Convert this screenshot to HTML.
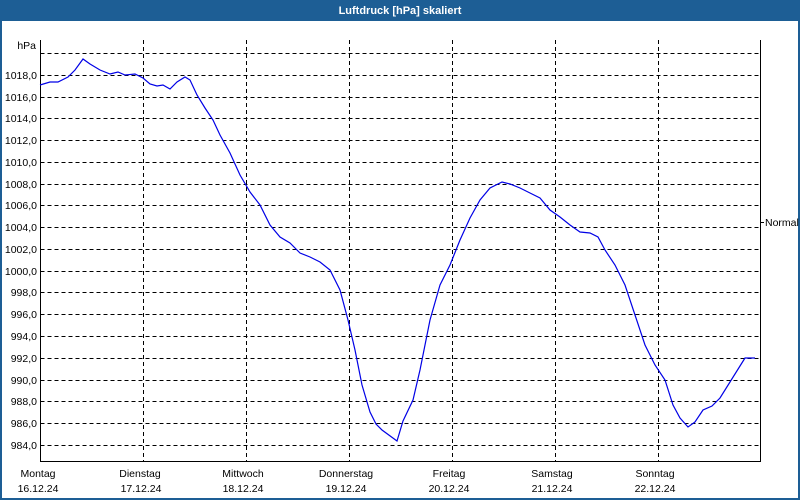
<!DOCTYPE html>
<html><head><meta charset="utf-8"><style>
body{margin:0;width:800px;height:500px;overflow:hidden;background:#fff}
</style></head><body>
<svg width="800" height="500" xmlns="http://www.w3.org/2000/svg" style="display:block;font-family:'Liberation Sans',sans-serif">
<rect x="0" y="0" width="800" height="500" fill="#1d5e95"/>
<rect x="2" y="21" width="796" height="477" fill="#fff"/>
<text x="400" y="14" fill="#fff" font-size="11" font-weight="bold" text-anchor="middle">Luftdruck [hPa] skaliert</text>
<g stroke="#000" stroke-width="1" stroke-dasharray="4,3" fill="none">
<path d="M40.5 53.5H760M40.5 75.5H760M40.5 97.5H760M40.5 118.5H760M40.5 140.5H760M40.5 162.5H760M40.5 184.5H760M40.5 205.5H760M40.5 227.5H760M40.5 249.5H760M40.5 271.5H760M40.5 292.5H760M40.5 314.5H760M40.5 336.5H760M40.5 358.5H760M40.5 380.5H760M40.5 401.5H760M40.5 423.5H760M40.5 445.5H760"/>
<path d="M143.5 40V461M246.5 40V461M349.5 40V461M452.5 40V461M555.5 40V461M658.5 40V461"/>
</g>
<path d="M40.5 40V461.5H760.5V40" stroke="#000" fill="none"/>
<path d="M760 222.5h4" stroke="#000"/>
<g font-size="10.5" fill="#000">
<text x="36" y="49" text-anchor="end">hPa</text>
<g text-anchor="end">
<text x="37" y="79">1018,0</text><text x="37" y="101">1016,0</text><text x="37" y="122">1014,0</text><text x="37" y="144">1012,0</text><text x="37" y="166">1010,0</text><text x="37" y="188">1008,0</text><text x="37" y="209">1006,0</text><text x="37" y="231">1004,0</text><text x="37" y="253">1002,0</text><text x="37" y="275">1000,0</text><text x="37" y="296">998,0</text><text x="37" y="318">996,0</text><text x="37" y="340">994,0</text><text x="37" y="362">992,0</text><text x="37" y="384">990,0</text><text x="37" y="405">988,0</text><text x="37" y="427">986,0</text><text x="37" y="449">984,0</text>
</g>
<text x="765" y="226">Normal</text>
<g text-anchor="middle">
<text x="38" y="477">Montag</text><text x="38" y="492">16.12.24</text>
<text x="140" y="477">Dienstag</text><text x="141" y="492">17.12.24</text>
<text x="243" y="477">Mittwoch</text><text x="243" y="492">18.12.24</text>
<text x="346" y="477">Donnerstag</text><text x="346" y="492">19.12.24</text>
<text x="449" y="477">Freitag</text><text x="449" y="492">20.12.24</text>
<text x="552" y="477">Samstag</text><text x="552" y="492">21.12.24</text>
<text x="655" y="477">Sonntag</text><text x="655" y="492">22.12.24</text>
</g></g>
<polyline fill="none" stroke="#0000e6" stroke-width="1.2" points="40,85 50,82 58,82 68,77 75,70 83,59 90,64 100,70 110,74 118,72 125,75 135,74 143,78 150,84 157,86 163,85 170,89 177,82 185,77 190,80 197,95 205,108 213,120 220,135 230,153 240,175 250,192 260,205 270,225 280,237 290,243 300,253 310,257 320,262 330,270 340,290 348,320 355,350 362,385 370,412 376,424 382,430 397,441 403,421 413,400 420,370 430,320 440,285 450,265 460,240 470,218 480,200 490,188 502,182 510,184 520,188 530,193 540,198 550,210 560,217 570,225 580,232 590,233 598,237 605,250 615,265 625,285 635,315 645,345 655,365 665,380 673,405 680,418 688,427 695,422 703,410 712,406 720,398 730,382 740,366 745,358 755,358"/>
</svg>
</body></html>
